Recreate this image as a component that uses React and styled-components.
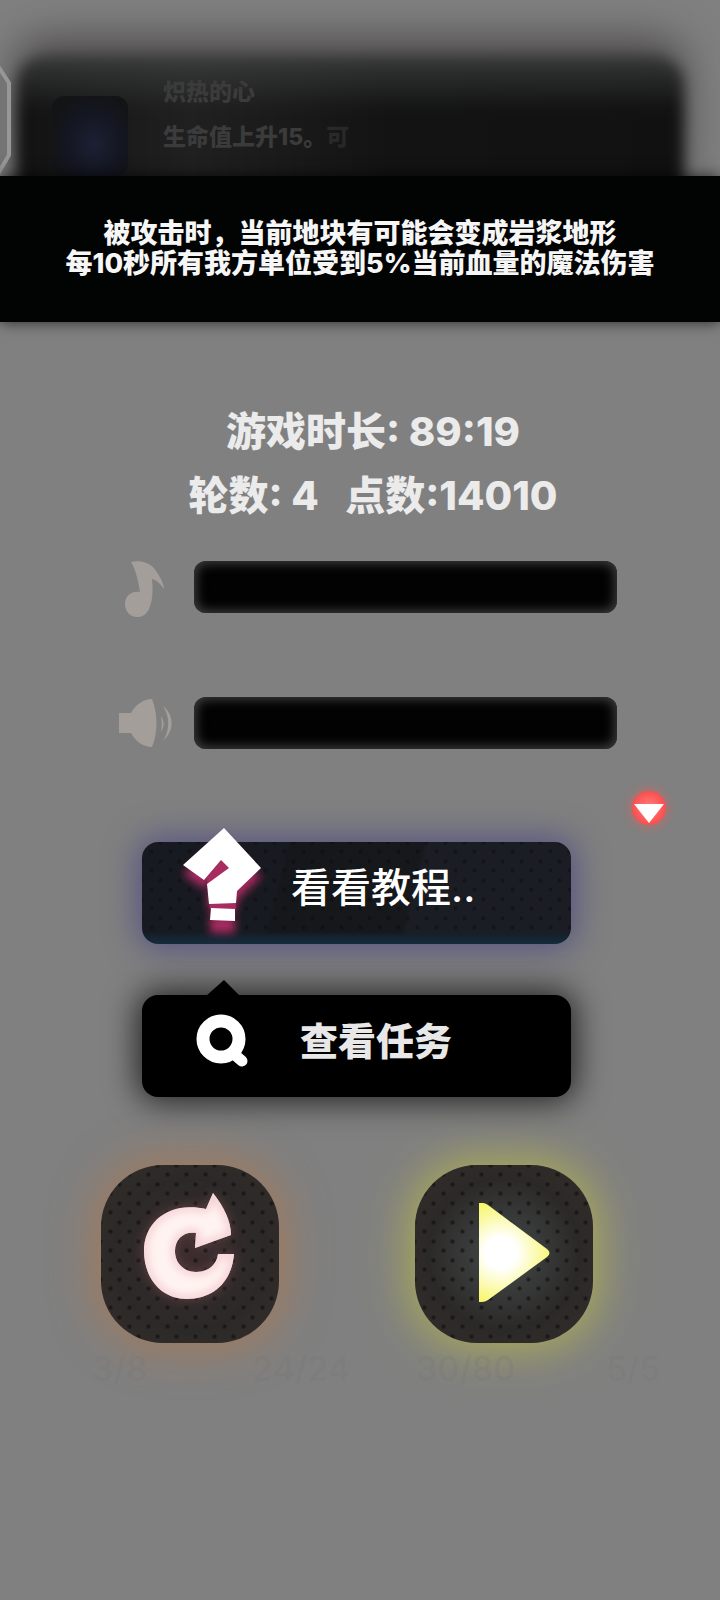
import React, { useState } from "react";
import styled, { createGlobalStyle, css } from "styled-components";

const GlobalStyle = createGlobalStyle`
  * {
    box-sizing: border-box;
  }

  body {
    margin: 0;
    background: #808080;
    font-family: Inter, "Noto Sans CJK SC", sans-serif;
    font-weight: 800;
  }
`;

const Screen = styled.main`
  min-height: 100vh;
  overflow: hidden;
  background: #808080;
`;

const RelicArea = styled.section`
  position: relative;
  height: 176px;
  padding: 56px 36px 0 16px;
`;

const RelicCard = styled.div`
  position: relative;
  display: flex;
  gap: 35px;
  height: 150px;
  padding: 20px 36px;

  /* soft-edged backdrop behind the icon and text */
  &::before {
    content: "";
    position: absolute;
    inset: 0;
    border-radius: 28px;
    background: linear-gradient(
        180deg,
        rgba(62, 64, 64, 0.8),
        rgba(30, 30, 30, 0) 36%
      ),
      linear-gradient(90deg, #121212, #202020 26%, #131313 56%, #111);
    box-shadow: 0 -16px 40px 0 rgba(50, 44, 44, 0.7);
    filter: blur(7px);
  }
`;

const RelicIcon = styled.div`
  position: relative;
  width: 76px;
  height: 80px;
  margin-top: 20px;
  border-radius: 12px;
  background: radial-gradient(
    ellipse at 55% 60%,
    #1b2034,
    #141722 45%,
    #131416 75%
  );
`;

const RelicText = styled.div`
  position: relative;
  color: #3b3b3b;
  font-size: 23px;
  line-height: 32px;

  p {
    margin: 0 0 13px;
  }
`;

const Fade = styled.span`
  opacity: ${(props) => props.$opacity};
`;

const EdgeFrame = styled.svg`
  position: absolute;
  left: 0;
  top: 60px;
`;

const Notice = styled.section`
  position: relative;
  padding: 43px 16px;
  background: #020303;
  box-shadow: 0 0 14px rgba(0, 0, 0, 0.7);
  color: #f6f6f6;
  font-size: 27px;
  line-height: 30px;
  text-align: center;

  p {
    margin: 0;
  }
`;

const Stats = styled.section`
  padding: 78px 0 0 26px;
  color: #ebebeb;
  font-size: 40px;
  line-height: 64px;
  text-align: center;
  white-space: pre;

  p {
    margin: 0;
  }
`;

const Volumes = styled.section`
  display: grid;
  gap: 84px;
  padding: 33px 103px 0 118px;
`;

const VolumeRow = styled.label`
  display: grid;
  grid-template-columns: 56px 1fr;
  grid-template-rows: 52px;
  column-gap: 20px;
  align-items: center;
`;

const VolumeSlider = styled.input`
  appearance: none;
  width: 100%;
  height: 52px;
  margin: 0;
  border-radius: 12px;
  background: #020202;
  box-shadow: inset 0 0 12px 2px #444;

  &::-webkit-slider-thumb {
    appearance: none;
    width: 1px;
    height: 1px;
  }
`;

const MarkerRow = styled.div`
  display: flex;
  justify-content: flex-end;
  padding: 42px 54px 0 0;
`;

const MarkerButton = styled.button`
  width: 34px;
  height: 34px;
  padding: 0;
  border: 0;
  border-radius: 50%;
  background: radial-gradient(circle, #ff7373 20%, #fa4646 80%);
  box-shadow: 0 0 12px rgba(255, 90, 90, 0.7);

  svg {
    display: block;
  }
`;

const Menu = styled.nav`
  display: grid;
  gap: 51px;
  padding: 17px 149px 0 142px;
`;

const MenuButton = styled.button`
  position: relative;
  display: flex;
  align-items: center;
  height: 102px;
  padding: 0 0 10px 158px;
  border: 0;
  border-radius: 16px;
  color: #e8e8e8;
  background: #000;
  box-shadow: 0 0 32px 4px rgba(0, 0, 0, 0.75);
  font-family: inherit;
  font-size: 38px;
  font-weight: 800;
  line-height: 48px;

  ${(props) =>
    props.$tutorial &&
    css`
      padding-left: 149px;
      color: #fff;
      background: linear-gradient(
          180deg,
          transparent 88%,
          #14222e 92%,
          #152b3c
        ),
        radial-gradient(circle, rgba(8, 8, 10, 0.4) 1px, transparent 3px) 0 0 /
          19px 19px,
        radial-gradient(circle, rgba(8, 8, 10, 0.4) 1px, transparent 3px) 9px
          10px / 19px 19px,
        linear-gradient(
          104deg,
          #171a20 32%,
          #15171a 33%,
          #16181c 62%,
          #1b1d24 63%
        );
      box-shadow: 0 0 32px 4px rgba(70, 66, 130, 0.75);
      font-size: 40px;
      font-weight: 500;
    `}
`;

const MenuIcon = styled.svg`
  position: absolute;
  left: 34px;
  top: -20px;
  overflow: visible;
`;

const Actions = styled.section`
  display: flex;
  justify-content: space-between;
  padding: 68px 127px 0 101px;
`;

const ActionButton = styled.button`
  width: 178px;
  height: 178px;
  padding: 0;
  border: 0;
  border-radius: 62px;
  background: radial-gradient(
        circle,
        rgba(14, 11, 10, 0.6) 1px,
        transparent 3px
      )
      0 0 / 19px 19px,
    radial-gradient(circle, rgba(14, 11, 10, 0.6) 1px, transparent 3px) 9px
      10px / 19px 19px,
    radial-gradient(circle, ${(props) => props.$inner}, #2b2928 60%, #362e2a);
  box-shadow: 0 0 44px 6px ${(props) => props.$glow};

  svg {
    display: block;
    overflow: visible;
  }
`;

const Counters = styled.footer`
  display: grid;
  grid-template-columns: 160px 164px 190px 1fr;
  padding: 6px 20px 0 92px;
  color: rgba(118, 118, 118, 0.25);
  font-size: 34px;
  font-weight: 500;
  line-height: 40px;
`;

const MusicIcon = () => (
  <svg width="56" height="60" viewBox="0 -3 56 60" fill="#a49e9b">
    <path d="M13 2C29-1 36 7 40 14C44 20 46 26 46 29C42 23 38 20 34 19C35 29 35 40 31 49C28 55 24 57 19 57C12 57 7 51 7 44C7 36 13 31 22 32C20 19 17 8 13 2Z" />
  </svg>
);

const SpeakerIcon = () => (
  <svg width="56" height="50" viewBox="0 0 56 50" fill="#a49e9b">
    <path d="M1 15H13C18 6 26 1 34 1C40 16 40 34 34 49C26 49 18 44 13 35H1Z" />
    <path d="M43 18C47 24 46 29 43 34C44 28 44 24 43 18Z" />
    <path d="M45 8C57 18 56 33 45 43C52 32 52 19 45 8Z" />
  </svg>
);

const QuestionIcon = () => (
  <MenuIcon width="100" height="120" viewBox="0 0 100 120" aria-hidden="true">
    <defs>
      <filter id="pinkBlur" x="-30%" y="-30%" width="160%" height="160%">
        <feGaussianBlur stdDeviation="4" />
      </filter>
    </defs>
    <g fill="#a82c60" filter="url(#pinkBlur)" transform="translate(0 9)">
      <path d="M48 6L85 46L61 69L60 81H33L31 62L53 46L45 38L28 58L7 43Z" />
      <path d="M34 85L59 86L59 102H34Z" />
    </g>
    <path fill="#a82c60" d="M45 38L58 52L60 87H34L31 56Z" />
    <g fill="#fff">
      <path d="M48 6L85 46L61 69L60 81L33 82L31 62L53 46L45 38L28 58L7 43Z" />
      <path d="M35 86L59 87L59 99L34 98Z" />
    </g>
  </MenuIcon>
);

const SearchIcon = () => (
  <MenuIcon width="100" height="120" viewBox="0 0 100 120" aria-hidden="true">
    <path d="M30 21L48 5L64 21Z" />
    <g fill="none" stroke="#fff">
      <ellipse cx="45" cy="64" rx="18" ry="18" strokeWidth="13" />
      <path d="M59 80L66 86" strokeWidth="11" strokeLinecap="round" />
    </g>
  </MenuIcon>
);

const RestartIcon = () => (
  <svg width="178" height="178" viewBox="0 0 178 178">
    <defs>
      <filter id="restartGlow" x="-30%" y="-30%" width="160%" height="160%">
        <feGaussianBlur stdDeviation="6" />
      </filter>
      <filter id="restartEdge">
        <feGaussianBlur stdDeviation="4" />
      </filter>
      <clipPath id="restartClip">
        <path d="M112 28C123 42 130 56 130 70L94 83L95 68C83 66 74 74 74 86C74 98 83 107 95 107C108 107 116 99 117 89H133C131 116 113 134 86 134C60 134 43 113 43 86C43 56 69 36 105 44Z" />
      </clipPath>
    </defs>
    <path
      d="M112 28C123 42 130 56 130 70L94 83L95 68C83 66 74 74 74 86C74 98 83 107 95 107C108 107 116 99 117 89H133C131 116 113 134 86 134C60 134 43 113 43 86C43 56 69 36 105 44Z"
      fill="#8c5a60"
      opacity="0.5"
      filter="url(#restartGlow)"
    />
    <g clipPath="url(#restartClip)">
      <path d="M30 20H145V145H30Z" fill="#fff3f1" />
      <path
        d="M112 28C123 42 130 56 130 70L94 83L95 68C83 66 74 74 74 86C74 98 83 107 95 107C108 107 116 99 117 89H133C131 116 113 134 86 134C60 134 43 113 43 86C43 56 69 36 105 44Z"
        fill="none"
        stroke="#f4ccd0"
        strokeWidth="7"
        filter="url(#restartEdge)"
      />
    </g>
  </svg>
);

const PlayIcon = () => (
  <svg width="178" height="178" viewBox="0 0 178 178">
    <defs>
      <radialGradient
        id="playFill"
        gradientUnits="userSpaceOnUse"
        cx="86"
        cy="88"
        r="52"
      >
        <stop offset="30%" stopColor="#fff" />
        <stop offset="100%" stopColor="#f8f66c" />
      </radialGradient>
    </defs>
    <path
      d="M64 38H68Q70 38 73 40L132 84Q137 88 132 92L73 135Q70 137 67 137H64Z"
      fill="url(#playFill)"
    />
  </svg>
);

const App = () => {
  const [volumes, setVolumes] = useState({ music: 0, sound: 0 });

  const handleChange = (fieldName) => (e) => {
    setVolumes({ ...volumes, [fieldName]: e.target.value });
  };

  return (
    <Screen>
      <GlobalStyle />
      <RelicArea>
        <RelicCard>
          <RelicIcon />
          <RelicText>
            <p>炽热的心</p>
            <p>
              生命值上升15。<Fade $opacity={0.5}>可</Fade>
            </p>
          </RelicText>
        </RelicCard>
        <EdgeFrame width="14" height="116" viewBox="0 0 14 116">
          <path
            d="M-2 6L9 23V95L-2 114"
            fill="#747474"
            stroke="#979797"
            strokeWidth="4"
          />
        </EdgeFrame>
      </RelicArea>
      <Notice>
        <p>被攻击时，当前地块有可能会变成岩浆地形</p>
        <p>每10秒所有我方单位受到5%当前血量的魔法伤害</p>
      </Notice>
      <Stats>
        <p>游戏时长: 89:19</p>
        <p>轮数: 4{"   "}点数:14010</p>
      </Stats>
      <Volumes>
        <VolumeRow>
          <MusicIcon />
          <VolumeSlider
            type="range"
            aria-label="音乐音量"
            value={volumes.music}
            onChange={handleChange("music")}
          />
        </VolumeRow>
        <VolumeRow>
          <SpeakerIcon />
          <VolumeSlider
            type="range"
            aria-label="音效音量"
            value={volumes.sound}
            onChange={handleChange("sound")}
          />
        </VolumeRow>
      </Volumes>
      <MarkerRow>
        <MarkerButton aria-label="展开">
          <svg width="34" height="34" viewBox="0 0 34 34">
            <path d="M2 13H32L17 32Z" fill="#fff" />
          </svg>
        </MarkerButton>
      </MarkerRow>
      <Menu>
        <MenuButton $tutorial>
          <QuestionIcon />
          看看教程..
        </MenuButton>
        <MenuButton>
          <SearchIcon />
          查看任务
        </MenuButton>
      </Menu>
      <Actions>
        <ActionButton
          aria-label="重新开始"
          $inner="#3d2c2e"
          $glow="rgba(176, 120, 76, 0.7)"
        >
          <RestartIcon />
        </ActionButton>
        <ActionButton
          aria-label="继续"
          $inner="#454b4b"
          $glow="rgba(180, 180, 80, 0.85)"
        >
          <PlayIcon />
        </ActionButton>
      </Actions>
      <Counters>
        <span>3/8</span>
        <span>24/24</span>
        <span>30/80</span>
        <span>5/5</span>
      </Counters>
    </Screen>
  );
};

export default App;
